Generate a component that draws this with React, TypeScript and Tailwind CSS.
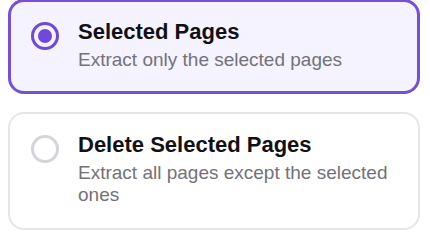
import React from "react";

const options = [
  {
    id: "selected",
    title: "Selected Pages",
    description: "Extract only the selected pages",
  },
  {
    id: "delete",
    title: "Delete Selected Pages",
    description: "Extract all pages except the selected ones",
  },
];

export default function App() {
  const active = "selected";
  return (
    <div className="w-[430px] h-[240px] bg-white pl-2 pr-2.5 font-['Liberation_Sans',Arial,sans-serif]">
      <div className="flex flex-col gap-[18px] -mt-px">
        {options.map((opt) => {
          const on = opt.id === active;
          return (
            <div
              key={opt.id}
              className={
                on
                  ? "flex items-start gap-[19px] rounded-2xl border-[3px] border-[#7650d8] bg-[#f5f3ff] pl-5 pr-4 pt-[17px] pb-5"
                  : "flex items-start gap-[19px] rounded-2xl border-2 border-[#e6e6e9] bg-white pl-[21px] pr-4 pt-[18px] pb-[22px]"
              }
            >
              {on ? (
                <div className="mt-[3px] w-7 h-7 shrink-0 rounded-full border-[3px] border-[#7048dc] flex items-center justify-center">
                  <div className="w-3.5 h-3.5 rounded-full bg-[#7048dc]" />
                </div>
              ) : (
                <div className="mt-[3px] w-7 h-7 shrink-0 rounded-full border-[3px] border-[#d4d4da]" />
              )}
              <div className="flex flex-col">
                <span className="text-[22px] leading-[26px] font-bold text-[#111114]">{opt.title}</span>
                <span className="mt-1 text-[19px] leading-[22px] text-[#727279]">{opt.description}</span>
              </div>
            </div>
          );
        })}
      </div>
    </div>
  );
}
